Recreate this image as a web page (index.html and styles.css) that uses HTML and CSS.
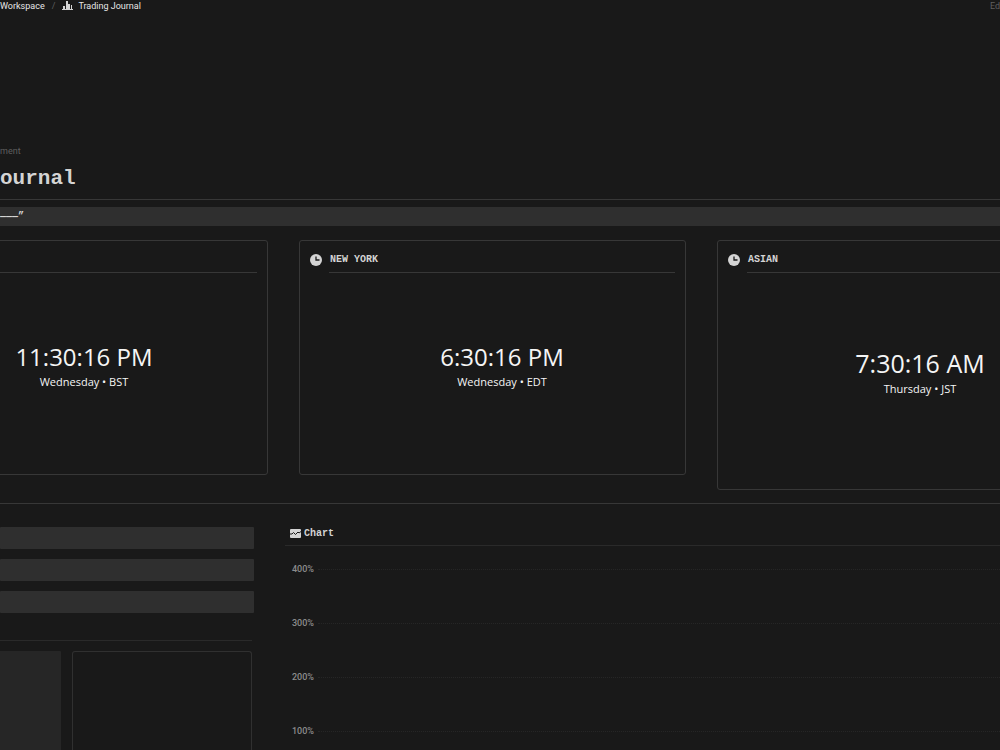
FILE: index.html
```html
<!DOCTYPE html>
<html lang="en">
<head>
    <meta charset="UTF-8">
    <meta name="viewport" content="width=device-width, initial-scale=1.0">
    <title>Trading Journal</title>
    <link rel="stylesheet" href="styles.css">
</head>
<body>
    <header class="topbar">
        <nav class="breadcrumb">
            <a href="#">Workspace</a>
            <span class="slash">/</span>
            <a href="#" class="current">
                <svg class="bars-icon" width="11" height="11" viewBox="0 0 11 11">
                    <path d="M0 9h11v1H0zM1 6h2v3H1zM4 1h2v8H4zM6 4h2v5H6zM9 5h1v4H9z" fill="#d4d4d4"/>
                </svg>
                Trading Journal
            </a>
        </nav>
        <span class="edited">Ed</span>
    </header>

    <main class="page">
        <div class="page-head">
            <a href="#" class="comment">ment</a>
            <h1>ournal</h1>
        </div>
        <div class="quote">———”</div>

        <!-- Market sessions -->
        <section class="sessions">
            <article class="session">
                <div class="session-head"></div>
                <div class="clock">
                    <div class="time">11:30:16 PM</div>
                    <div class="day">Wednesday • BST</div>
                </div>
            </article>
            <article class="session">
                <div class="session-head">
                    <svg width="12" height="12" viewBox="0 0 12 12">
                        <circle cx="6" cy="6" r="6" fill="#d4d4d4"/>
                        <path d="M6 2.500V6h3.500" fill="none" stroke="#191919" stroke-width="1.300"/>
                    </svg>
                    <h2>NEW YORK</h2>
                </div>
                <div class="clock">
                    <div class="time">6:30:16 PM</div>
                    <div class="day">Wednesday • EDT</div>
                </div>
            </article>
            <article class="session large">
                <div class="session-head">
                    <svg width="12" height="12" viewBox="0 0 12 12">
                        <circle cx="6" cy="6" r="6" fill="#d4d4d4"/>
                        <path d="M6 2.500V6h3.500" fill="none" stroke="#191919" stroke-width="1.300"/>
                    </svg>
                    <h2>ASIAN</h2>
                </div>
                <div class="clock">
                    <div class="time">7:30:16 AM</div>
                    <div class="day">Thursday • JST</div>
                </div>
            </article>
        </section>

        <section class="columns">
            <div class="side">
                <div class="callout"></div>
                <div class="callout"></div>
                <div class="callout"></div>
                <div class="tiles">
                    <div class="tile filled"></div>
                    <div class="tile"></div>
                </div>
            </div>

            <div class="chart">
                <div class="chart-head">
                    <svg width="11" height="9" viewBox="0 0 11 9">
                        <rect width="11" height="9" rx="1" fill="#d4d4d4"/>
                        <path d="M0 5l2 0L3.500 3.500l2 2L8 3l1 1L11 2.500" fill="none" stroke="#191919"/>
                    </svg>
                    <h2>Chart</h2>
                </div>
                <div class="plot">
                    <div class="tick">400%</div>
                    <div class="tick">300%</div>
                    <div class="tick">200%</div>
                    <div class="tick">100%</div>
                </div>
            </div>
        </section>
    </main>
</body>
</html>
```

FILE: styles.css
```css
* {
    box-sizing: border-box;
}
body {
    margin: 0;
    height: 100vh;
    display: flex;
    flex-direction: column;
    overflow: hidden;
    background-color: #191919;
    color: #d4d4d4;
    font-family: Roboto, sans-serif;
    font-size: 9px;
    line-height: 12px;
}
svg {
    display: block;
    flex: none;
}
a {
    color: inherit;
    text-decoration: none;
}
h1, h2 {
    margin: 0;
    font-family: "Liberation Mono", monospace;
    font-weight: bold;
}
h2 {
    font-size: 10px;
    line-height: 12px;
}

/* Top bar */
.topbar {
    display: flex;
    justify-content: space-between;
    height: 12px;
}
.breadcrumb {
    display: flex;
    gap: 7px;
    color: #e6e6e6;
}
.current {
    display: flex;
    gap: 5px;
}
.slash, .edited, .comment {
    color: #5f5f5f;
}

/* Page title */
.page {
    flex: 1;
    display: flex;
    flex-direction: column;
    min-height: 0;
    overflow: hidden;
}
.page-head {
    padding-top: 133px;
    padding-bottom: 7px;
    border-bottom: 1px solid #373737;
}
.comment {
    display: block;
}
h1 {
    margin-top: 9px;
    font-size: 21px;
    line-height: 26px;
}
.quote {
    margin-top: 7px;
    height: 19px;
    background-color: #2f2f2f;
    font-family: "Liberation Mono", monospace;
    font-size: 10px;
    font-weight: bold;
    line-height: 19px;
}

/* Sessions run past both edges of the window */
.sessions {
    display: grid;
    grid-template-columns: repeat(3, 1fr);
    gap: 31px;
    align-items: start;
    margin: 14px -104px 0 -119px;
    padding-bottom: 13px;
    border-bottom: 1px solid #373737;
}
.session {
    height: 235px;
    padding: 0 10px;
    border: 1px solid #373737;
    border-radius: 3px;
}
.session-head {
    display: flex;
    align-items: center;
    gap: 8px;
    height: 31px;
    padding-top: 7px;
}
.clock {
    margin-left: 19px;
    padding-top: 67px;
    border-top: 1px solid #373737;
    color: #f5f5f5;
    font-family: "Open Sans", sans-serif;
    text-align: center;
}
.time {
    font-size: 24px;
    line-height: 34px;
}
.day {
    font-size: 11px;
    line-height: 15px;
}
.large {
    height: 250px;
}
.large .clock {
    padding-top: 73px;
}
.large .time {
    font-size: 25px;
    line-height: 35px;
}

/* Lower columns */
.columns {
    flex: 1;
    display: grid;
    grid-template-columns: 254fr 715fr;
    gap: 31px;
    min-height: 0;
    padding-top: 23px;
}
.side {
    display: flex;
    flex-direction: column;
    gap: 10px;
}
.callout {
    height: 22px;
    border-radius: 1px;
    background-color: #2f2f2f;
}
.tiles {
    flex: 1;
    display: grid;
    grid-template-columns: 61fr 180fr;
    gap: 11px;
    margin-top: 17px;
    margin-right: 2px;
    padding-top: 10px;
    border-top: 1px solid #2a2a2a;
}
.tile {
    border: 1px solid #303030;
    border-bottom: none;
    border-radius: 3px 3px 0 0;
}
.filled {
    border: none;
    border-radius: 0 1px 0 0;
    background-color: #262626;
}
.chart-head {
    display: flex;
    align-items: center;
    gap: 3px;
    height: 19px;
    padding: 0 5px 5px;
    border-bottom: 1px solid #2a2a2a;
}
.plot {
    display: grid;
    gap: 42px;
    padding: 17px 0 0 7px;
}
.tick {
    display: flex;
    align-items: center;
    gap: 4px;
    color: #8c8c8c;
    font-weight: 500;
}
.tick::after {
    content: "";
    flex: 1;
    border-top: 1px dotted #262626;
}
```
